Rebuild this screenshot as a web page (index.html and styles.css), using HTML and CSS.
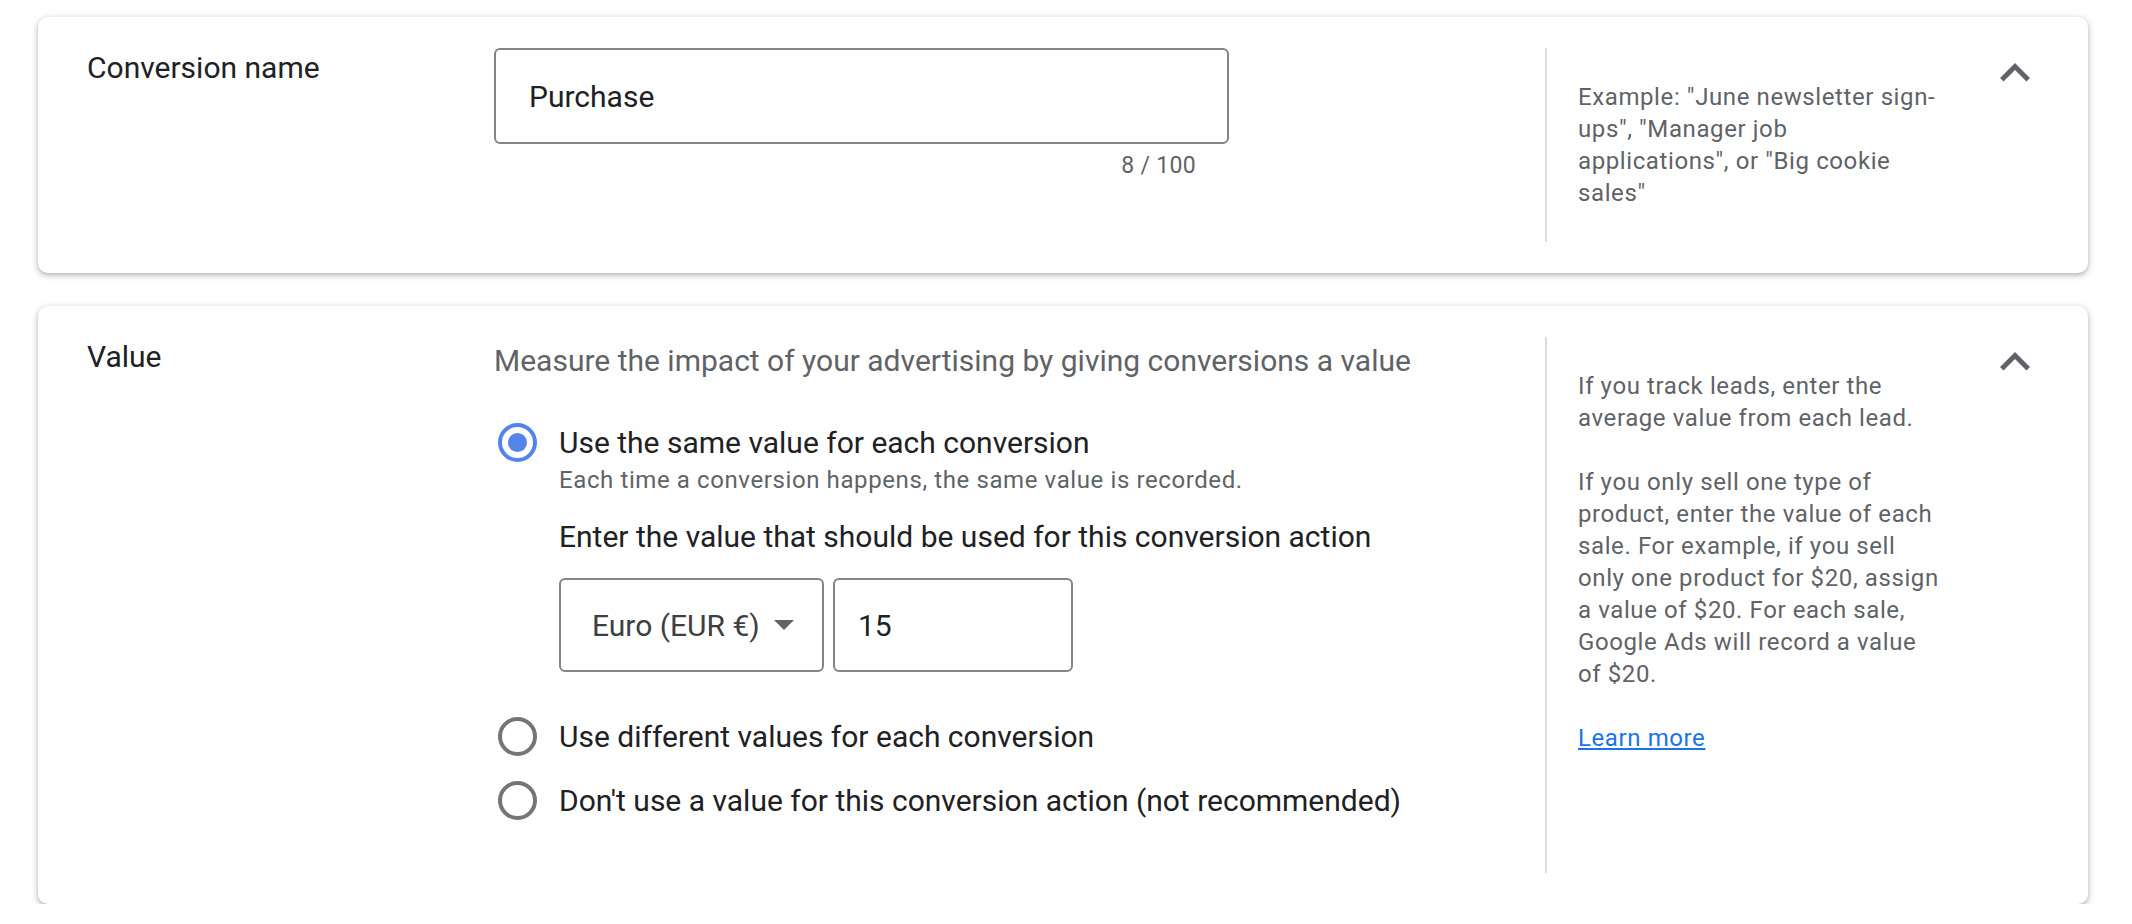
FILE: index.html
```html
<!DOCTYPE html>
<html lang="en">
<head>
    <meta charset="UTF-8">
    <title>Conversion action</title>
    <link rel="stylesheet" href="styles.css">
</head>
<body>
    <div class="page">
        <!-- 转化名称 -->
        <section class="card">
            <div class="card-label">Conversion name</div>
            <div class="card-main">
                <div class="text-field">Purchase</div>
                <div class="counter">8 / 100</div>
            </div>
            <aside class="card-help">
                Example: "June newsletter sign-ups", "Manager job applications", or "Big cookie sales"
            </aside>
            <div class="toggle">
                <svg viewBox="0 0 24 24" width="60" height="60"><path d="M12 8l-6 6 1.41 1.41L12 10.83l4.59 4.58L18 14z"/></svg>
            </div>
        </section>

        <!-- 转化价值 -->
        <section class="card">
            <div class="card-label">Value</div>
            <div class="card-main value-main">
                <div class="desc">Measure the impact of your advertising by giving conversions a value</div>

                <div class="radio-row first">
                    <span class="radio checked"></span>
                    <span>Use the same value for each conversion</span>
                </div>
                <div class="radio-body">
                    <div class="radio-sub">Each time a conversion happens, the same value is recorded.</div>
                    <div class="value-title">Enter the value that should be used for this conversion action</div>
                    <div class="value-fields">
                        <div class="select">
                            <span>Euro (EUR €)</span>
                            <span class="caret"></span>
                        </div>
                        <div class="amount">15</div>
                    </div>
                </div>

                <div class="radio-row second">
                    <span class="radio"></span>
                    <span>Use different values for each conversion</span>
                </div>
                <div class="radio-row third">
                    <span class="radio"></span>
                    <span>Don't use a value for this conversion action (not recommended)</span>
                </div>
            </div>
            <aside class="card-help">
                If you track leads, enter the average value from each lead.<br><br>
                If you only sell one type of product, enter the value of each sale. For example, if you sell only one product for $20, assign a value of $20. For each sale, Google Ads will record a value of $20.<br><br>
                <a href="#">Learn more</a>
            </aside>
            <div class="toggle">
                <svg viewBox="0 0 24 24" width="60" height="60"><path d="M12 8l-6 6 1.41 1.41L12 10.83l4.59 4.58L18 14z"/></svg>
            </div>
        </section>
    </div>
</body>
</html>
```

FILE: styles.css
```css
* {
    margin: 0;
    padding: 0;
    box-sizing: border-box;
    font-family: Roboto, 'Noto Sans', sans-serif;
}

body {
    background: #fff;
    color: #202124;
}

.page {
    padding: 17px 44px 0 38px;
    display: flex;
    flex-direction: column;
    gap: 33px;
}

.card {
    display: flex;
    background: white;
    border-radius: 10px;
    padding: 31px 43px 31px 49px;
    box-shadow: 0 2px 4px rgba(60, 64, 67, 0.28), 0 2px 6px 2px rgba(60, 64, 67, 0.12);
}

.card-label {
    width: 407px;
    flex-shrink: 0;
    font-size: 30px;
    line-height: 40px;
    color: #202124;
}

.card-main {
    flex: 1;
}

.value-main {
    padding-bottom: 53px;
}

.card-help {
    width: 399px;
    flex-shrink: 0;
    border-left: 2px solid #dadce0;
    padding: 33px 0 33px 31px;
    font-size: 24px;
    line-height: 32px;
    letter-spacing: 0.6px;
    color: #5f6368;
}

.card-help a {
    color: #1a73e8;
}

.toggle {
    width: 60px;
    height: 60px;
    margin: -5px 0 0 41px;
    flex-shrink: 0;
}

.toggle svg {
    display: block;
    fill: #5f6368;
}

/* 文本输入 */
.text-field {
    width: 735px;
    height: 96px;
    border: 2px solid #80868b;
    border-radius: 6px;
    padding: 0 33px;
    display: flex;
    align-items: center;
    font-size: 30px;
    color: #202124;
}

.counter {
    width: 735px;
    padding-right: 33px;
    margin-top: 6px;
    text-align: right;
    font-size: 23px;
    line-height: 32px;
    letter-spacing: 0.3px;
    color: #5f6368;
}

/* 价值 */
.desc {
    font-size: 30px;
    line-height: 48px;
    color: #5f6368;
}

.radio-row {
    display: flex;
    align-items: center;
    height: 40px;
    font-size: 30px;
    color: #202124;
}

.radio-row.first {
    margin-top: 37px;
}

.radio-row.second {
    margin-top: 44px;
}

.radio-row.third {
    margin-top: 24px;
}

.radio {
    width: 39px;
    height: 39px;
    border-radius: 50%;
    border: 4px solid #757575;
    margin: 0 22px 0 4px;
    flex-shrink: 0;
    display: flex;
    align-items: center;
    justify-content: center;
}

.radio.checked {
    border-color: #5384ec;
}

.radio.checked::after {
    content: "";
    width: 19px;
    height: 19px;
    border-radius: 50%;
    background: #5384ec;
}

.radio-body {
    padding-left: 65px;
}

.radio-sub {
    font-size: 24px;
    line-height: 36px;
    letter-spacing: 0.6px;
    color: #5f6368;
}

.value-title {
    margin-top: 19px;
    font-size: 30px;
    line-height: 40px;
    color: #202124;
}

.value-fields {
    display: flex;
    gap: 9px;
    margin-top: 21px;
}

.select,
.amount {
    height: 94px;
    border: 2px solid #80868b;
    border-radius: 6px;
    display: flex;
    align-items: center;
    font-size: 30px;
}

.select {
    width: 265px;
    padding-left: 31px;
    color: #3c4043;
}

.caret {
    width: 0;
    height: 0;
    margin-left: 14px;
    border-left: 10px solid transparent;
    border-right: 10px solid transparent;
    border-top: 10px solid #5f6368;
}

.amount {
    width: 240px;
    padding-left: 23px;
    color: #202124;
}
```
